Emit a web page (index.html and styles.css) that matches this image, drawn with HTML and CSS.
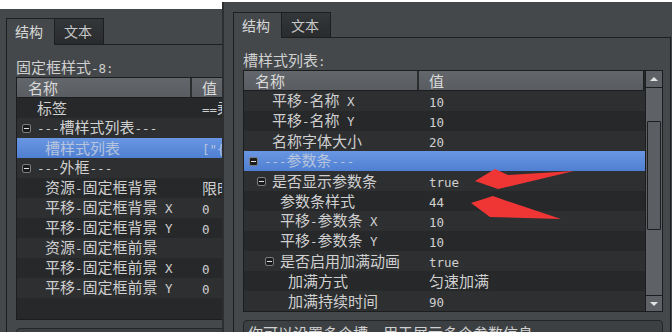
FILE: index.html
```html
<!DOCTYPE html>
<html lang="zh">
<head>
    <meta charset="UTF-8">
    <meta name="viewport" content="width=device-width, initial-scale=1.0">
    <title>属性面板</title>
    <link rel="stylesheet" href="styles.css">
</head>
<body>
<div class="desk">
    <div class="win win-back">
        <div class="tabs">
            <div class="tab active">结构</div>
            <div class="tab">文本</div>
        </div>
        <div class="pane">
            <div class="caption">固定框样式<span class="en">-8:</span></div>
            <div class="tree">
                <div class="tree-main">
                    <div class="head">
                        <div class="col-name">名称</div>
                        <div class="col-val">值</div>
                    </div>
                    <div class="rows" id="rows-left"></div>
                </div>
            </div>
            <div class="note"></div>
        </div>
    </div>

    <div class="win win-front">
        <div class="tabs">
            <div class="tab active">结构</div>
            <div class="tab">文本</div>
        </div>
        <div class="pane">
            <div class="caption">槽样式列表<span class="en">:</span></div>
            <div class="tree">
                <div class="tree-main">
                    <div class="head">
                        <div class="col-name">名称</div>
                        <div class="col-val">值</div>
                    </div>
                    <div class="rows" id="rows-right"></div>
                </div>
                <div class="vscroll">
                    <div class="sbtn up"></div>
                    <div class="track"><div class="thumb"></div></div>
                    <div class="sbtn down"></div>
                </div>
            </div>
            <div class="note">你可以设置多个槽，用于展示多个参数信息</div>
        </div>
    </div>

    <!-- red annotation arrows -->
    <svg class="marks" width="672" height="332" viewBox="0 0 672 332">
        <polygon points="475,181 495,169 508,175 574,171 498,189" fill="#f03535"/>
        <polygon points="471,203 493,196 507,201 561,219 490,217" fill="#f03535"/>
    </svg>
</div>

<script>
    const leftRows = [
        { n: '标签', v: '==乘客==', l: 0 },
        { n: '---槽样式列表---', l: 0, t: true },
        { n: '槽样式列表', v: '["{"name"', l: 1, sel: true },
        { n: '---外框---', l: 0, t: true },
        { n: '资源-固定框背景', v: '限时活动', l: 1 },
        { n: '平移-固定框背景 X', v: '0', l: 1 },
        { n: '平移-固定框背景 Y', v: '0', l: 1 },
        { n: '资源-固定框前景', v: '', l: 1 },
        { n: '平移-固定框前景 X', v: '0', l: 1 },
        { n: '平移-固定框前景 Y', v: '0', l: 1 }
    ];

    const rightRows = [
        { n: '平移-名称 X', v: '10', l: 1 },
        { n: '平移-名称 Y', v: '10', l: 1 },
        { n: '名称字体大小', v: '20', l: 1 },
        { n: '---参数条---', l: 0, t: true, sel: true },
        { n: '是否显示参数条', v: 'true', l: 1, t: true },
        { n: '参数条样式', v: '44', l: 2 },
        { n: '平移-参数条 X', v: '10', l: 2 },
        { n: '平移-参数条 Y', v: '10', l: 2 },
        { n: '是否启用加满动画', v: 'true', l: 2, t: true },
        { n: '加满方式', v: '匀速加满', l: 3 },
        { n: '加满持续时间', v: '90', l: 3 }
    ];

    // latin parts use the narrow mono font
    function txt(s) {
        return s.replace(/[ -~]+/g, m => `<span class="en">${m}</span>`);
    }

    function fill(id, rows, altFirst) {
        const box = document.getElementById(id);
        rows.forEach((r, i) => {
            let cls = 'row';
            if ((i % 2 === 0) === altFirst) cls += ' alt';
            if (r.sel) cls += ' sel';
            box.innerHTML += `<div class="${cls}">
                <div class="cell-name lv${r.l}">
                    <span class="tog">${r.t ? '<i></i>' : ''}</span>
                    <span class="name">${txt(r.n)}</span>
                </div>
                <div class="cell-val">${txt(r.v || '')}</div>
            </div>`;
        });
    }

    fill('rows-left', leftRows, false);
    fill('rows-right', rightRows, true);
</script>
</body>
</html>
```

FILE: styles.css
```css
body {
    margin: 0;
    background-color: #fff;
    overflow: hidden;
    font-family: "Noto Sans CJK SC", sans-serif;
    color: #d0d0d0;
}

.desk {
    position: relative;
    width: 672px;
    height: 332px;
    overflow: hidden;
}

.en {
    font-family: "DejaVu Sans Mono", monospace;
    font-size: 12.5px;
}

/* windows */
.win {
    position: absolute;
    box-sizing: border-box;
    background-color: #45484b;
}

.win-back {
    left: 0;
    top: 9px;
    width: 320px;
    height: 323px;
    padding: 9px 0 0 6px;
}

.win-front {
    left: 222px;
    top: 2px;
    width: 460px;
    height: 330px;
    padding: 10px 0 0 9px;
    border-left: 2px solid #2c2e31;
}

/* tabs */
.tabs {
    display: flex;
    height: 26px;
}

.win-front .tabs {
    height: 25px;
}

.tab {
    position: relative;
    width: 49px;
    box-sizing: border-box;
    border: 1px solid #1d1e1f;
    border-bottom: none;
    padding-left: 8px;
    font-size: 14px;
    line-height: 25px;
    color: #c8c8c8;
    background: linear-gradient(#34373a, #292b2d);
}

.tab + .tab {
    border-left: none;
    padding-left: 9px;
}

.tab.active {
    background: #45484b;
    color: #d8d8d8;
    margin-bottom: -1px;
    z-index: 1;
}

/* pane */
.pane {
    border-top: 1px solid #1d1e1f;
    border-left: 1px solid #1d1e1f;
    padding: 14px 0 0 9px;
    height: 100%;
}

.win-front .pane {
    border-right: 1px solid #1d1e1f;
    width: 438px;
    box-sizing: border-box;
}

.caption {
    font-size: 15px;
    line-height: 16px;
    color: #d0d0d0;
}

/* tree view */
.tree {
    display: flex;
    box-sizing: border-box;
    border: 1px solid #1c1d1e;
    background-color: #26282a;
    width: 300px;
    height: 243px;
}

.win-front .tree {
    width: 420px;
    height: 242px;
}

.tree-main {
    flex: 1;
    min-width: 0;
}

.head {
    display: flex;
    height: 20px;
    box-sizing: border-box;
    border-bottom: 1px solid #1c1d1e;
    background: linear-gradient(#63676b, #595d61);
    font-size: 15px;
    line-height: 19px;
    color: #dadada;
}

.win-front .head {
    border-right: 1px solid #1c1d1e;
    margin-right: 1px;
}

.col-name {
    width: 175px;
    flex: none;
    box-sizing: border-box;
    padding-left: 11px;
    border-right: 2px solid #2b2d2f;
}

.col-val {
    padding-left: 10px;
}

.row {
    display: flex;
    height: 20px;
    line-height: 20px;
    font-size: 15px;
    white-space: nowrap;
}

.row.alt {
    background-color: #2d2f31;
}

.row.sel {
    background: linear-gradient(#6a97e3, #4f7fd2);
    color: #b6c4dc;
}

.cell-name {
    width: 175px;
    flex: none;
    box-sizing: border-box;
    display: flex;
    align-items: center;
}

.lv0 { padding-left: 5px; }
.lv1 { padding-left: 13px; }
.lv2 { padding-left: 21px; }
.lv3 { padding-left: 29px; }

.tog {
    width: 15px;
    flex: none;
    display: flex;
    align-items: center;
}

.tog i {
    width: 9px;
    height: 9px;
    box-sizing: border-box;
    border: 1px solid #7a7e82;
    border-radius: 2px;
    background-color: #1b1c1d;
    display: flex;
    align-items: center;
    justify-content: center;
}

.tog i::after {
    content: "";
    width: 5px;
    height: 1px;
    background-color: #e2e2e2;
}

.cell-val {
    padding-left: 10px;
}

/* scrollbar */
.vscroll {
    width: 17px;
    flex: none;
    display: flex;
    flex-direction: column;
    box-sizing: border-box;
    border-left: 1px solid #1c1d1e;
    background-color: #5e6266;
}

.sbtn {
    height: 17px;
    flex: none;
    box-sizing: border-box;
    display: flex;
    align-items: center;
    justify-content: center;
}

.sbtn.up {
    border-bottom: 1px solid #1c1d1e;
}

.sbtn.down {
    height: 16px;
    border-top: 1px solid #1c1d1e;
}

.sbtn.up::after {
    content: "";
    border-left: 4px solid transparent;
    border-right: 4px solid transparent;
    border-bottom: 4px solid #e4e4e4;
}

.sbtn.down::after {
    content: "";
    border-left: 4px solid transparent;
    border-right: 4px solid transparent;
    border-top: 4px solid #e4e4e4;
}

.track {
    flex: 1;
    padding: 33px 1px 0;
}

.thumb {
    height: 109px;
    box-sizing: border-box;
    border: 1px solid #1c1d1e;
    border-radius: 1px;
    background-color: #5b5f63;
}

/* info box under the tree */
.note {
    margin-top: 8px;
    width: 300px;
    height: 30px;
    box-sizing: border-box;
    border: 1px solid #232527;
    border-radius: 4px;
    background-color: #3d4043;
    padding: 1px 4px;
    font-size: 15px;
    line-height: 22px;
    color: #d0d0d0;
    white-space: nowrap;
}

.win-front .note {
    width: 420px;
}

.marks {
    position: absolute;
    left: 0;
    top: 0;
    pointer-events: none;
}
```
